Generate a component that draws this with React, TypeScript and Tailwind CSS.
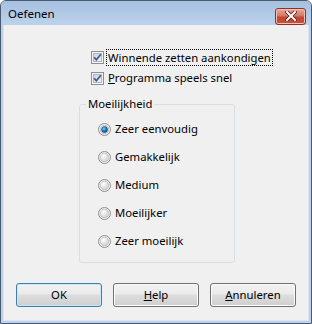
import React from 'react';

const font = { fontFamily: '"Noto Sans", "Open Sans", sans-serif' };

const CheckBox: React.FC = () => (
    <svg width="13" height="13" viewBox="0 0 13 13" className="shrink-0">
        <defs>
            <linearGradient id="cbIn" x1="0" y1="0" x2="1" y2="1">
                <stop offset="0" stopColor="#cbcfd5" />
                <stop offset="1" stopColor="#f6f6f6" />
            </linearGradient>
        </defs>
        <rect x="0.5" y="0.5" width="12" height="12" fill="#f4f4f4" stroke="#8e8f8f" />
        <rect x="2.5" y="2.5" width="8" height="8" fill="url(#cbIn)" stroke="#b1b6bd" />
        <path d="M3.2 6.4 L5.4 8.8 L9.8 3.2" fill="none" stroke="#3c5a96" strokeWidth="1.7" />
    </svg>
);

const Radio: React.FC<{ on?: boolean }> = ({ on }) => (
    <svg width="13" height="13" viewBox="0 0 13 13" className="shrink-0">
        <defs>
            <radialGradient id="rdOff" cx="0.35" cy="0.3" r="0.8">
                <stop offset="0" stopColor="#ffffff" />
                <stop offset="1" stopColor="#c9ccd1" />
            </radialGradient>
            <radialGradient id="rdOn" cx="0.4" cy="0.35" r="0.7">
                <stop offset="0" stopColor="#7fd0f7" />
                <stop offset="0.5" stopColor="#1a82c9" />
                <stop offset="1" stopColor="#0b3d74" />
            </radialGradient>
        </defs>
        <circle cx="6.5" cy="6.5" r="6" fill="#f2f2f2" stroke="#8e8f8f" />
        <circle cx="6.5" cy="6.5" r="4.3" fill="url(#rdOff)" stroke="#b8bcc2" strokeWidth="0.8" />
        {on && <circle cx="6.5" cy="6.5" r="3" fill="url(#rdOn)" stroke="#1d4f84" strokeWidth="0.6" />}
    </svg>
);

const Button: React.FC<{ primary?: boolean; children: React.ReactNode }> = ({ primary, children }) => (
    <div
        className={`w-[86px] h-[24px] rounded-[3px] border flex items-center justify-center text-black ${
            primary
                ? 'border-[#3c7fb1] shadow-[inset_0_0_0_1px_#c6e8f9]'
                : 'border-[#707070] shadow-[inset_0_0_0_1px_#fcfcfc]'
        } bg-[linear-gradient(#f2f2f2_0%,#ebebeb_45%,#dddddd_50%,#cfcfcf_100%)]`}
    >
        {children}
    </div>
);

const options = ['Zeer eenvoudig', 'Gemakkelijk', 'Medium', 'Moeilijker', 'Zeer moeilijk'];

export default function App() {
    return (
        <div className="w-[312px] h-[324px] flex flex-col border border-[#4a5a6e] rounded-t-[6px] overflow-hidden bg-[#bcd2ec] text-[11.3px]" style={font}>
            <div className="h-[24px] shrink-0 flex items-center justify-between pl-[7px] pr-[5px] bg-[linear-gradient(#a6c0e0,#bcd2ec)]">
                <span className="text-[11.5px] text-black leading-none mt-[2px]">Oefenen</span>
                <div className="w-[31px] h-[17px] mt-[6px] rounded-[3px] border border-[#8b3328] flex items-center justify-center bg-[linear-gradient(#e9a99b_0%,#d47867_45%,#c24632_55%,#c8503a_100%)] shadow-[inset_0_0_0_1px_#f0c0b4]">
                    <svg width="12" height="10" viewBox="0 0 12 10">
                        <path d="M2 1 L10 9 M10 1 L2 9" stroke="#5a1d14" strokeWidth="3.6" strokeLinecap="square" />
                        <path d="M2 1 L10 9 M10 1 L2 9" stroke="#ffffff" strokeWidth="2" strokeLinecap="square" />
                    </svg>
                </div>
            </div>
            <div className="flex-1 flex px-[2px] pb-[2px]">
                <div className="flex-1 flex flex-col bg-[#f0f0f0] border border-t-0 border-[#dbe5f1] text-black">
                    <div className="pl-[87px] pt-[26px] flex flex-col gap-[8px]">
                        <div className="flex items-center h-[13px]">
                            <CheckBox />
                            <span className="ml-[3px] px-[1px] leading-[15px] outline outline-1 outline-dotted outline-black">Winnende zetten aankondigen</span>
                        </div>
                        <div className="flex items-center h-[13px]">
                            <CheckBox />
                            <span className="ml-[4px]">
                                <span className="underline">P</span>rogramma speels snel
                            </span>
                        </div>
                    </div>
                    <fieldset className="ml-[75px] mt-[12px] w-[156px] h-[166px] border border-[#d5dfe5] rounded-[3px] pl-[18px] pt-[4px]">
                        <legend className="-ml-[12px] px-[2px] leading-[14px]">Moeilijkheid</legend>
                        <div className="flex flex-col">
                            {options.map((o, i) => (
                                <div key={o} className="h-[28px] flex items-center">
                                    <Radio on={i === 0} />
                                    <span className="ml-[4px]">{o}</span>
                                </div>
                            ))}
                        </div>
                    </fieldset>
                    <div className="mt-auto mb-[13px] pl-[12px] flex gap-[11px]">
                        <Button primary>OK</Button>
                        <Button>
                            <span className="underline">H</span>elp
                        </Button>
                        <Button>
                            <span className="underline">A</span>nnuleren
                        </Button>
                    </div>
                </div>
            </div>
        </div>
    );
}
